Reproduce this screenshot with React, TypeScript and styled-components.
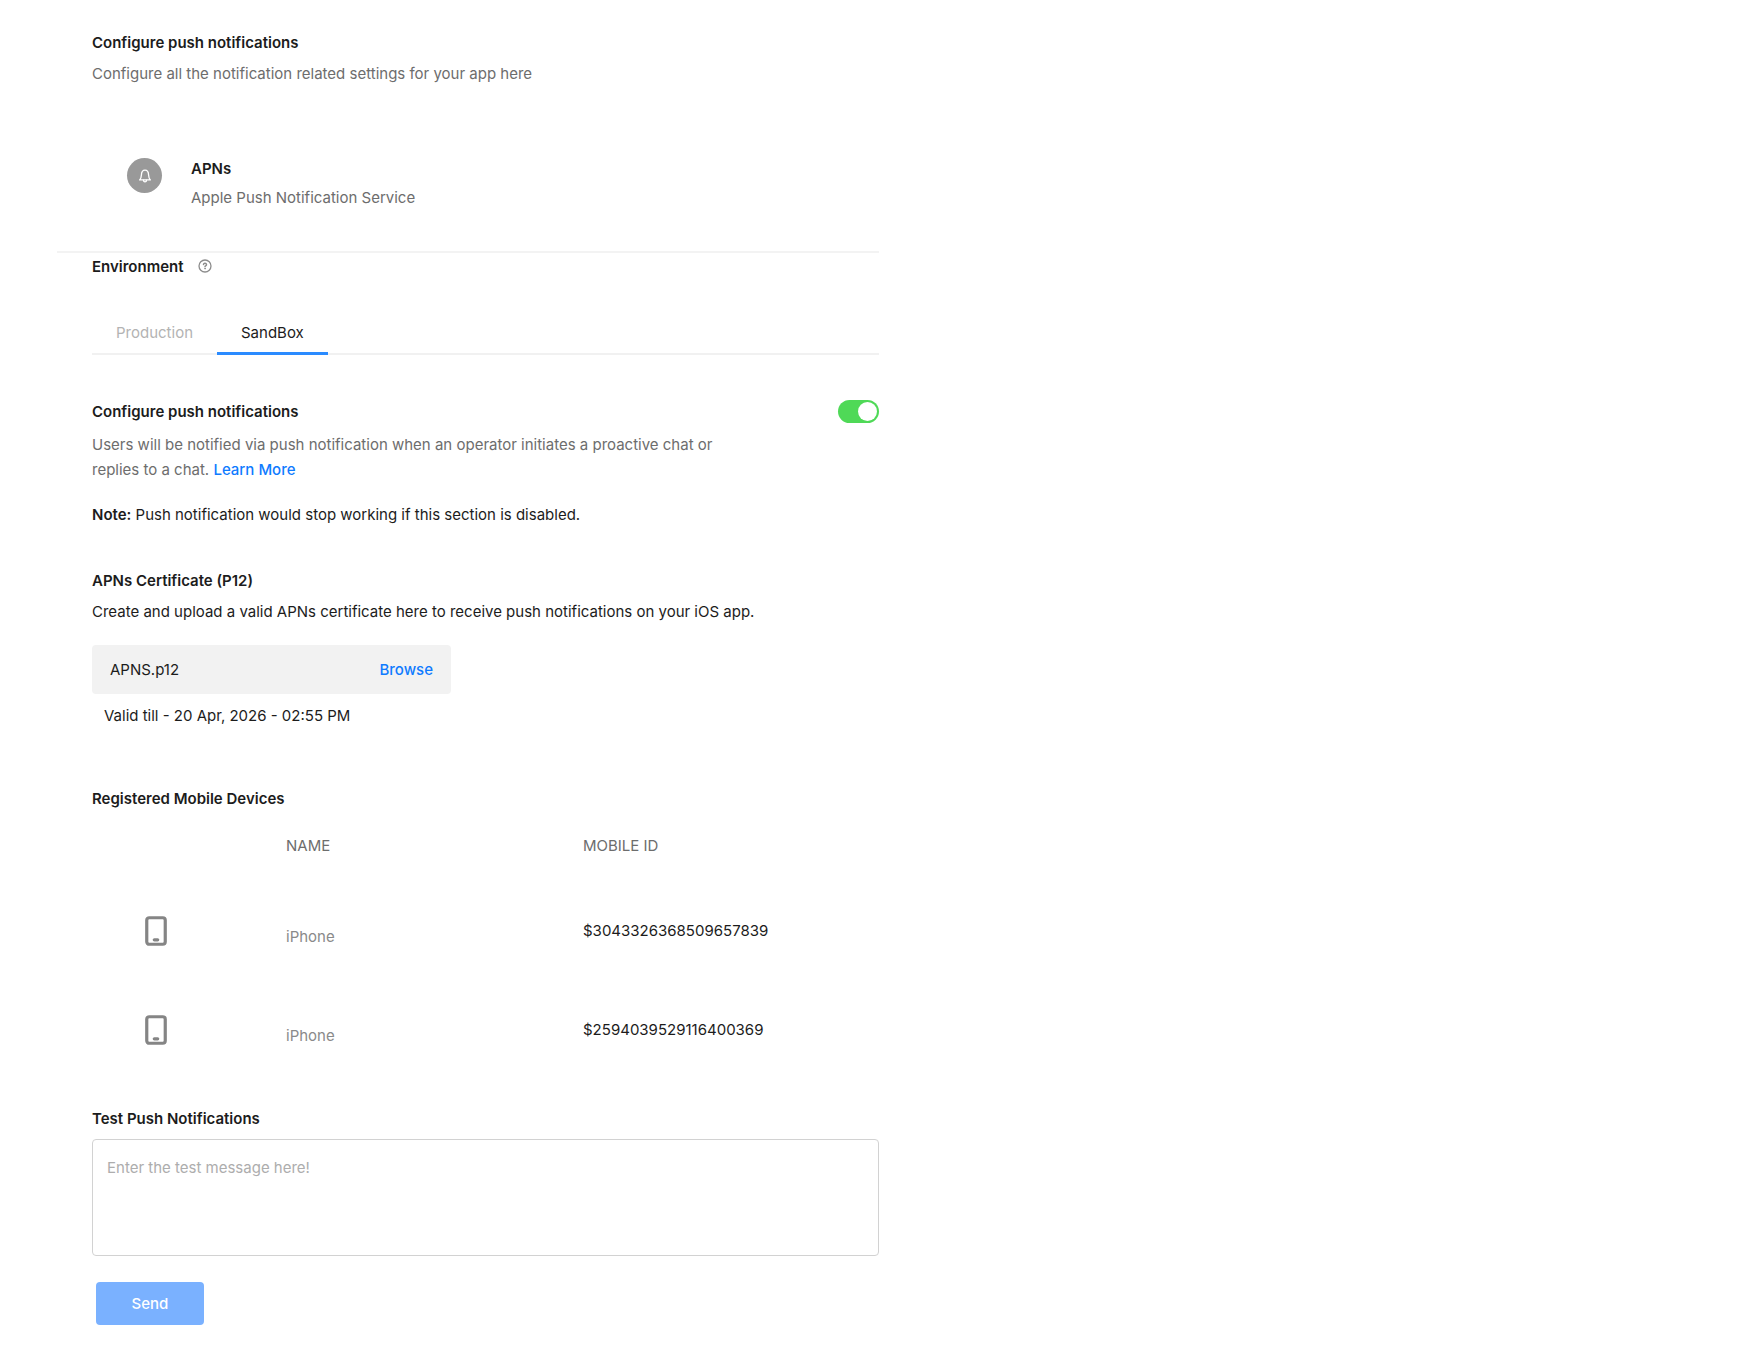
import React, { useState } from "react";
import styled, { createGlobalStyle } from "styled-components";

const GlobalStyle = createGlobalStyle`
  *, *::before, *::after { box-sizing: border-box; }
  body {
    margin: 0;
    background: #fff;
    color: #1c1c1c;
    font-family: Inter, "Liberation Sans", sans-serif;
    font-size: 15px;
    line-height: 25px;
  }
  button, input, textarea { font: inherit; }
`;

const Page = styled.main`
  max-width: 879px;
  padding: 30px 0 22px 57px;
`;

const Section = styled.section<{ $top?: number }>`
  padding-left: 35px;
  margin-top: ${(p) => p.$top ?? 0}px;
`;

const Heading = styled.h2`
  margin: 0;
  font-size: 15px;
  font-weight: 600;
`;

const Text = styled.p<{ $muted?: boolean; $top?: number }>`
  margin: ${(p) => p.$top ?? 0}px 0 0;
  color: ${(p) => (p.$muted ? "#6d6d6d" : "#1c1c1c")};
`;

const Strong = styled.strong`
  font-weight: 600;
`;

const Link = styled.a`
  display: inline-block;
  color: #0f7bff;
  font-weight: 500;
  text-decoration: none;
`;

const Service = styled.header`
  display: flex;
  align-items: flex-start;
  gap: 29px;
  margin-top: 70px;
  padding: 0 0 41px 70px;
  border-bottom: 2px solid #f3f3f3;
`;

const Badge = styled.span`
  display: flex;
  align-items: center;
  justify-content: center;
  width: 35px;
  height: 35px;
  margin-top: 2px;
  border-radius: 50%;
  background: #999;
`;

const TitleRow = styled.div`
  display: flex;
  align-items: center;
  gap: 14px;
`;

const HelpButton = styled.button`
  display: flex;
  padding: 0 0 2px;
  border: 0;
  background: none;
  color: #8c8c8c;
`;

const TabList = styled.div`
  display: flex;
  margin-top: 41px;
  box-shadow: inset 0 -2px #f1f1f1;
`;

const Tab = styled.button<{ $active: boolean }>`
  padding: 0 24px 7px;
  border: 0;
  border-bottom: 3px solid ${(p) => (p.$active ? "#2a8bff" : "transparent")};
  background: none;
  color: ${(p) => (p.$active ? "#1c1c1c" : "#b3b3b3")};
  cursor: pointer;
`;

const SettingHead = styled.div`
  display: flex;
  align-items: center;
  justify-content: space-between;
`;

const Switch = styled.input`
  appearance: none;
  display: flex;
  width: 41px;
  height: 23px;
  margin: 0;
  padding: 2px;
  border-radius: 12px;
  background: #c9c9c9;
  cursor: pointer;

  &::before {
    content: "";
    width: 19px;
    height: 19px;
    border-radius: 50%;
    background: #fff;
  }

  &:checked {
    justify-content: flex-end;
    background: #4fd957;
  }
`;

const Description = styled(Text)`
  max-width: 660px;
`;

const FileBox = styled.div`
  display: flex;
  align-items: center;
  justify-content: space-between;
  max-width: 359px;
  height: 49px;
  margin-top: 21px;
  padding: 0 18px;
  border-radius: 4px;
  background: #f2f2f2;
`;

const BrowseButton = styled.button`
  padding: 0;
  border: 0;
  background: none;
  color: #0f7bff;
  font-weight: 500;
  cursor: pointer;
`;

const Validity = styled(Text)`
  padding-left: 12px;
`;

const DeviceTable = styled.table`
  width: 100%;
  margin-top: 22px;
  border-collapse: collapse;
  table-layout: fixed;
`;

const HeadCell = styled.th<{ $width?: number }>`
  width: ${(p) => (p.$width ? `${p.$width}px` : "auto")};
  height: 48px;
  padding: 0;
  color: #6d6d6d;
  font-weight: 400;
  text-align: left;
  vertical-align: top;
`;

const Cell = styled.td`
  height: 99px;
  padding: 0;
`;

const IconCell = styled(Cell)`
  padding-left: 53px;

  svg { display: block; }
`;

const NameCell = styled(Cell)`
  padding-top: 12px;
  color: #8a8a8a;
`;

const FieldLabel = styled.label`
  display: block;
  font-weight: 600;
`;

const MessageBox = styled.textarea`
  display: block;
  width: 100%;
  height: 117px;
  margin-top: 8px;
  padding: 15px 14px;
  border: 1px solid #d2d2d2;
  border-radius: 4px;
  background: #fff;
  color: #1c1c1c;
  resize: none;

  &::placeholder { color: #adadad; opacity: 1; }
`;

const SendButton = styled.button`
  width: 108px;
  height: 43px;
  margin: 26px 0 0 4px;
  border: 0;
  border-radius: 4px;
  background: #7ab1ff;
  color: #fff;
  font-weight: 500;
`;

const BellIcon = () => (
  <svg width="14" height="14" viewBox="0 0 14 14" fill="none" stroke="#fff" strokeWidth="1.3" strokeLinecap="round" strokeLinejoin="round" aria-hidden="true">
    <path d="M1.6 10.9c1.2-1 1.7-2.2 1.8-4.8C3.5 3 4.700 1.200 7 1.200S10.500 3 10.600 6.100c.1 2.600.6 3.800 1.800 4.800z" />
    <path d="M5.500 11.200a1.500 1.700 0 0 0 3 0" />
  </svg>
);

const HelpIcon = () => (
  <svg width="14" height="14" viewBox="0 0 14 14" fill="none" stroke="currentColor" strokeWidth="1.3" strokeLinecap="round" aria-hidden="true">
    <circle cx="7" cy="7" r="6" />
    <path d="M5.500 5.500a1.500 1.400 0 1 1 2.400 1.200c-.6.4-.9.6-.9 1.100" strokeWidth="1.500" />
    <circle cx="7" cy="9.700" r=".4" fill="currentColor" strokeWidth=".8" />
  </svg>
);

const PhoneIcon = () => (
  <svg width="22" height="30" viewBox="0 0 22 30" fill="none" stroke="#858585" aria-hidden="true">
    <rect x="1.75" y="1.75" width="18.5" height="26.5" rx="2.5" strokeWidth="3.2" />
    <path d="M9.300 23.800h3.400" strokeWidth="3.200" strokeLinecap="round" />
  </svg>
);

const environments = ["Production", "SandBox"];
const devices = [
  { name: "iPhone", id: "$3043326368509657839" },
  { name: "iPhone", id: "$2594039529116400369" },
];

export default function App() {
  const [environment, setEnvironment] = useState("SandBox");
  const [enabled, setEnabled] = useState(true);

  return (
    <>
      <GlobalStyle />
      <Page>
        <Section>
          <Heading>Configure push notifications</Heading>
          <Text $muted $top={6}>Configure all the notification related settings for your app here</Text>
        </Section>

        <Service>
          <Badge><BellIcon /></Badge>
          <div>
            <Heading>APNs</Heading>
            <Text $muted $top={4}>Apple Push Notification Service</Text>
          </div>
        </Service>

        <Section $top={1}>
          <TitleRow>
            <Heading>Environment</Heading>
            <HelpButton aria-label="About environments"><HelpIcon /></HelpButton>
          </TitleRow>
          <TabList role="tablist">
            {environments.map((name) => (
              <Tab
                key={name}
                role="tab"
                aria-selected={name === environment}
                $active={name === environment}
                onClick={() => setEnvironment(name)}
              >
                {name}
              </Tab>
            ))}
          </TabList>
        </Section>

        <Section $top={44}>
          <SettingHead>
            <Heading as="label" htmlFor="push-enabled">Configure push notifications</Heading>
            <Switch
              id="push-enabled"
              type="checkbox"
              role="switch"
              checked={enabled}
              onChange={(e) => setEnabled(e.target.checked)}
            />
          </SettingHead>
          <Description $muted $top={8}>
            Users will be notified via push notification when an operator initiates a proactive chat or
            replies to a chat. <Link href="#learn-more">Learn More</Link>
          </Description>
          <Text $top={20}>
            <Strong>Note:</Strong> Push notification would stop working if this section is disabled.
          </Text>
        </Section>

        <Section $top={41}>
          <Heading>APNs Certificate (P12)</Heading>
          <Text $top={6}>Create and upload a valid APNs certificate here to receive push notifications on your iOS app.</Text>
          <FileBox>
            <span>APNS.p12</span>
            <BrowseButton>Browse</BrowseButton>
          </FileBox>
          <Validity $top={9}>Valid till - 20 Apr, 2026 - 02:55 PM</Validity>
        </Section>

        <Section $top={58}>
          <Heading>Registered Mobile Devices</Heading>
          <DeviceTable>
            <thead>
              <tr>
                <HeadCell $width={194} aria-label="Device" />
                <HeadCell $width={297}>NAME</HeadCell>
                <HeadCell>MOBILE ID</HeadCell>
              </tr>
            </thead>
            <tbody>
              {devices.map((device) => (
                <tr key={device.id}>
                  <IconCell><PhoneIcon /></IconCell>
                  <NameCell>{device.name}</NameCell>
                  <Cell>{device.id}</Cell>
                </tr>
              ))}
            </tbody>
          </DeviceTable>
        </Section>

        <Section $top={27}>
          <FieldLabel htmlFor="test-message">Test Push Notifications</FieldLabel>
          <MessageBox id="test-message" placeholder="Enter the test message here!" />
          <SendButton>Send</SendButton>
        </Section>
      </Page>
    </>
  );
}
